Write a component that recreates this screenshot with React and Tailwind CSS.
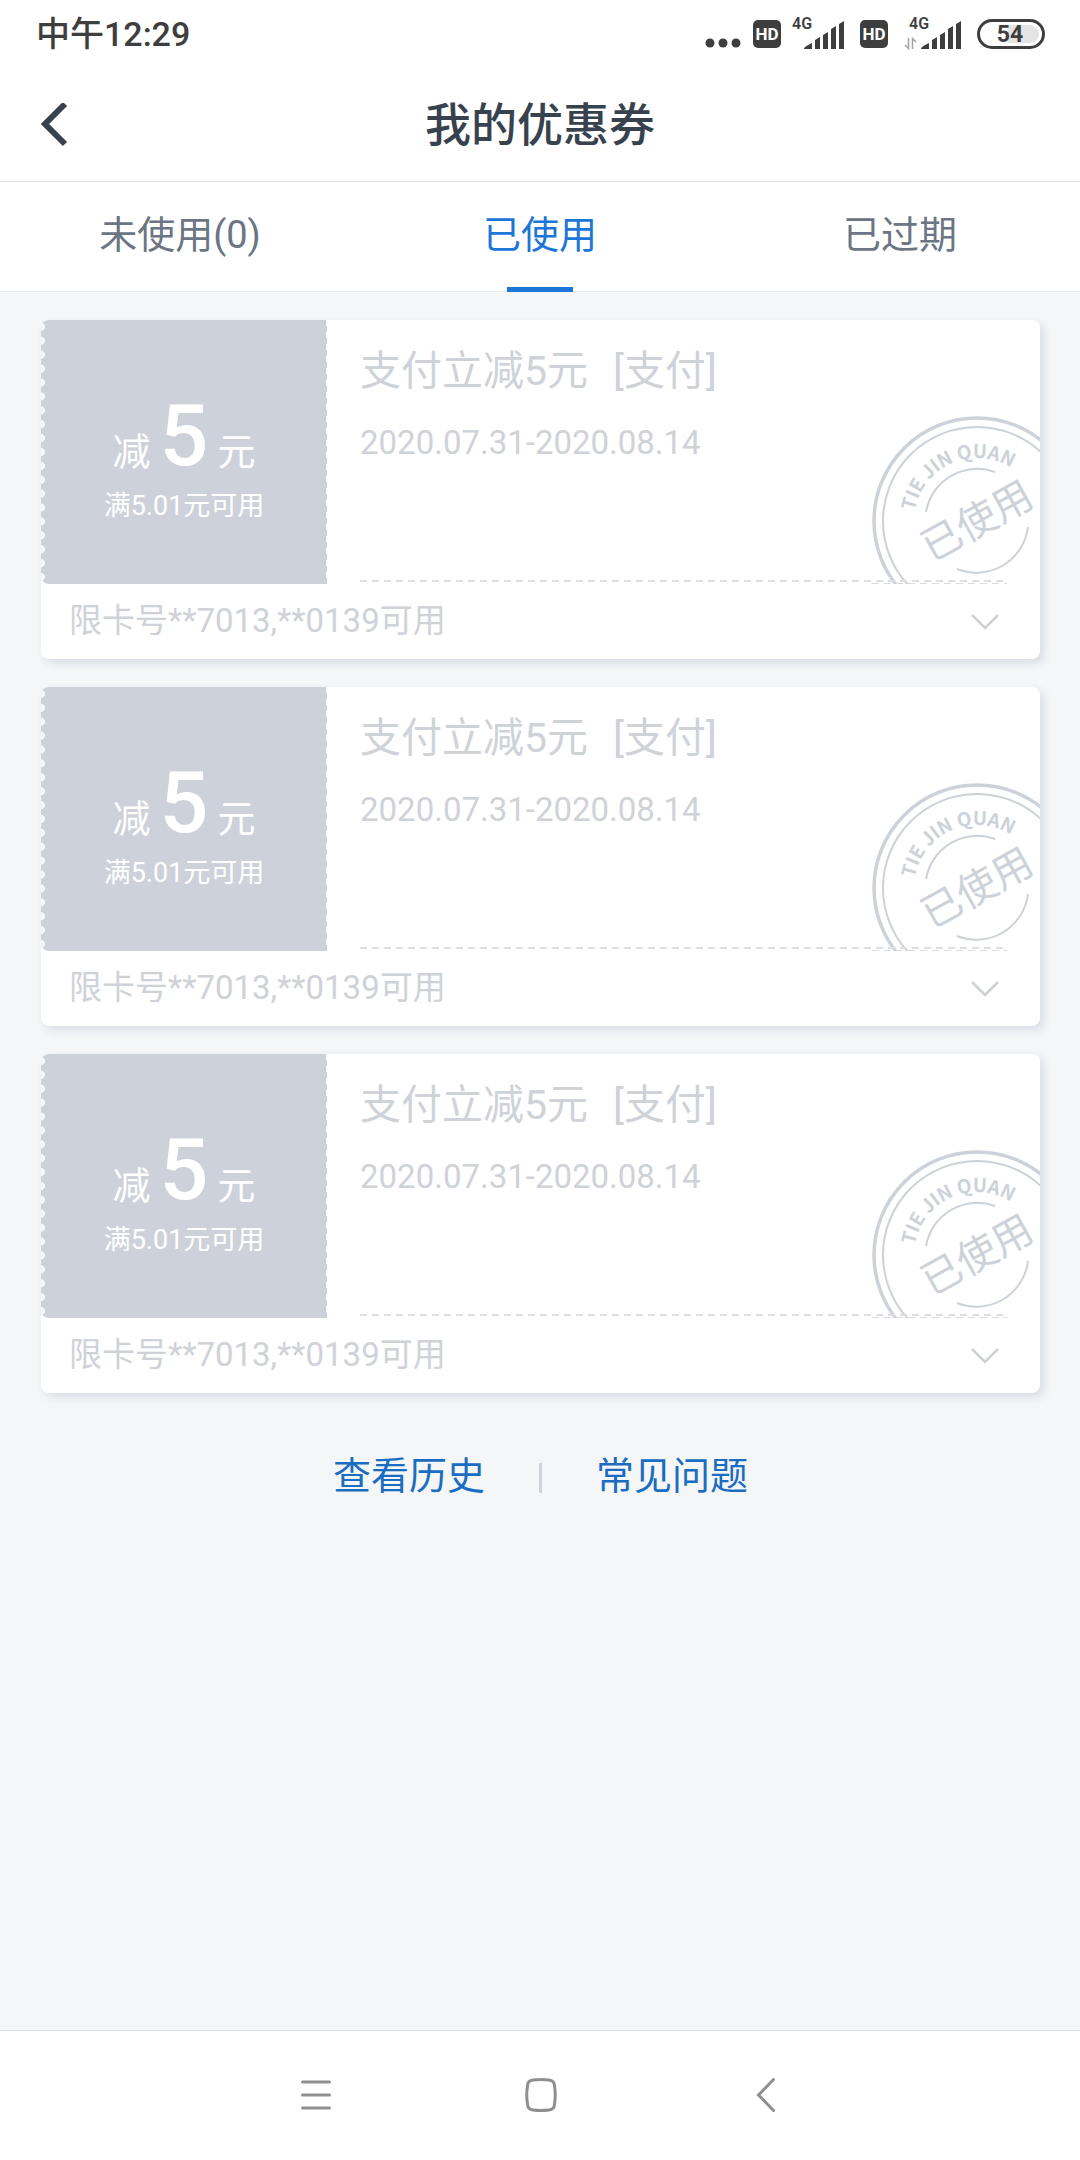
import { useState } from "react";

const tabs = [
  { id: "unused", label: "未使用(0)" },
  { id: "used", label: "已使用" },
  { id: "expired", label: "已过期" },
];

const coupons = [1, 2, 3].map((id) => ({
  id,
  amount: "5",
  condition: "满5.01元可用",
  name: "支付立减5元",
  type: "[支付]",
  period: "2020.07.31-2020.08.14",
  limit: "限卡号**7013,**0139可用",
}));

function HdIcon() {
  return (
    <svg width="28" height="28" viewBox="0 0 28 28">
      <rect width="28" height="28" rx="5" fill="#3e3e3e" />
      <text x="14" y="20" textAnchor="middle" fontSize="17" fontWeight="700" fill="#fff">HD</text>
    </svg>
  );
}

function SignalIcon({ data }) {
  return (
    <svg width={data ? 57 : 52} height="40" viewBox={data ? "-5 -4 57 40" : "0 -4 52 40"} fill="#3e3e3e">
      <text x="0" y="11" fontSize="16" fontWeight="600">4G</text>
      <path d="M12 31c0-2 4-4 8-6v6zM23 22l5-3v12h-5zM31 17l5-3v17h-5zM39 11l5-3v23h-5zM47 6l5-3v28h-5z" />
      {data && (
        <path d="M-4 27l3.500 3.500V20M3.500 31V20.500L7 24" fill="none" stroke="#a3a3a3" strokeWidth="1.5" />
      )}
    </svg>
  );
}

function StatusBar() {
  return (
    <div className="flex h-[68px] items-center justify-between pl-9 pr-[35px] text-[#3e3e3e]">
      <span className="text-[34px] leading-10 font-medium">中午12:29</span>
      <div className="flex items-center">
        <svg width="36" height="28" viewBox="0 0 36 28" fill="#3e3e3e" className="mr-3">
          <circle cx="5" cy="23" r="4.5" />
          <circle cx="18" cy="23" r="4.5" />
          <circle cx="31" cy="23" r="4.5" />
        </svg>
        <HdIcon />
        <span className="ml-[11px] mr-4"><SignalIcon /></span>
        <HdIcon />
        <span className="mx-4"><SignalIcon data /></span>
        <svg width="68" height="30" viewBox="0 0 68 30">
          <path d="M31 6h22a9 9 0 0 1 0 18h-22z" fill="#e4e4e4" />
          <rect x="1.5" y="1.5" width="65" height="27" rx="13.5" fill="none" stroke="#3e3e3e" strokeWidth="3" />
          <text x="33" y="23" textAnchor="middle" fontSize="23" fontWeight="700" fill="#3e3e3e">54</text>
        </svg>
      </div>
    </div>
  );
}

function Stamp() {
  return (
    <svg width="168" height="168" viewBox="0 0 168 168" fill="none" stroke="#cdd2d9">
      <circle cx="105" cy="105" r="103" strokeWidth="3.5" />
      <circle cx="105" cy="105" r="94" strokeWidth="2" />
      <path d="M54 96A52 52 0 0 1 123 56M156 111A52 52 0 0 1 85 153" strokeWidth="2" />
      <path id="stampArc" d="M42 105A63 63 0 0 1 168 105" stroke="none" />
      <text fontSize="19" fontWeight="700" fill="#cdd2d9" stroke="none" className="[font-family:'Noto_Sans_CJK_SC',sans-serif]">
        <textPath href="#stampArc" startOffset="10">TIE JIN QUAN</textPath>
      </text>
      <text x="105" y="119" textAnchor="middle" fontSize="40" fill="#cdd2d9" stroke="none" transform="rotate(-29 105 105)">
        已使用
      </text>
    </svg>
  );
}

function Coupon({ coupon }) {
  return (
    <article className="rounded-lg bg-white text-[#cfd2d7] shadow-[4px_4px_8px_#d8dde5]">
      <div className="flex h-[264px]">
        {/* montant, bords dentelés */}
        <div className="relative flex w-[286px] flex-col items-center rounded-l-lg bg-[#cdd2da] pt-[72px] text-white">
          <div className="absolute inset-y-0 left-0 w-1 bg-[radial-gradient(circle_at_0_50%,#f4f6f8_4px,transparent_4px)] bg-[length:4px_14px] [background-repeat:no-repeat_round]" />
          <div className="absolute inset-y-0 right-0 w-px bg-[linear-gradient(#fff_6px,transparent_6px)] bg-[length:1px_12px] [background-repeat:no-repeat_round]" />
          <div className="flex items-baseline gap-[9px] text-[38px] leading-[88px]">
            <span>减</span>
            <span className="text-[86px] font-medium">{coupon.amount}</span>
            <span>元</span>
          </div>
          <p className="-mt-[15px] text-[27px] leading-[50px]">{coupon.condition}</p>
        </div>

        <div className="relative flex-1 pl-[33px] pt-[25px]">
          <h2 className="flex gap-[25px] text-[41px] leading-[52px]">
            <span>{coupon.name}</span>
            <span>{coupon.type}</span>
          </h2>
          <p className="mt-5 text-[33px] leading-[52px]">{coupon.period}</p>
          <div className="absolute right-0 bottom-0">
            <Stamp />
            <div className="absolute bottom-0 left-0 right-[33px] h-px bg-[repeating-linear-gradient(90deg,#d9dbde_0_7px,transparent_7px_12px)]" />
          </div>
          <div className="absolute right-[33px] bottom-0.5 left-[33px] h-0.5 bg-[repeating-linear-gradient(90deg,#dddfe2_0_7px,transparent_7px_12px)]" />
        </div>
      </div>

      <div className="flex h-[75px] items-center justify-between pb-0.5 pl-7 pr-[41px]">
        <span className="text-[33px]">{coupon.limit}</span>
        <button type="button" aria-label="展开" className="pt-0.5">
          <svg width="28" height="16" viewBox="0 0 28 16" fill="none" stroke="#cdd1d7" strokeWidth="2.5">
            <path d="M1 1l13 13L27 1" />
          </svg>
        </button>
      </div>
    </article>
  );
}

export default function App() {
  const [active, setActive] = useState("used");

  return (
    <div className="flex min-h-screen flex-col bg-[#f4f6f8] [font-family:Roboto,'Noto_Sans_CJK_SC',sans-serif]">
      <div className="bg-white">
        <StatusBar />

        <header className="grid h-[114px] grid-cols-[120px_1fr_120px] items-center border-b border-[#dddfe1] text-[#37424e]">
          <button type="button" aria-label="返回" className="pl-10">
            <svg width="28" height="44" viewBox="0 0 28 44" fill="none" stroke="currentColor" strokeWidth="6">
              <path d="M25 1L5 21l20 20" />
            </svg>
          </button>
          <h1 className="text-center text-[46px] leading-[60px] font-medium">我的优惠券</h1>
        </header>

        <nav role="tablist" className="grid h-[110px] grid-cols-3 border-b border-[#e8eaec]">
          {tabs.map((tab) => (
            <button
              key={tab.id}
              type="button"
              role="tab"
              aria-selected={active === tab.id}
              onClick={() => setActive(tab.id)}
              className={`relative pb-0.5 text-[38px] ${active === tab.id ? "text-[#1d75d8]" : "text-[#6b7583]"}`}
            >
              {tab.label}
              {active === tab.id && (
                <span className="absolute -bottom-px left-1/2 h-[5px] w-[66px] -translate-x-1/2 bg-[#1d75d8]" />
              )}
            </button>
          ))}
        </nav>
      </div>

      <main className="flex-1 pt-7 pr-10 pl-[41px]">
        <div className="flex flex-col gap-7">
          {coupons.map((coupon) => (
            <Coupon key={coupon.id} coupon={coupon} />
          ))}
        </div>

        <div className="mt-[57px] flex items-center justify-center gap-[54px] text-[38px] leading-[52px] text-[#1b6dc1]">
          <a href="#history">查看历史</a>
          <span className="mt-1 h-[30px] w-[3px] bg-[#d0d3d9]" />
          <a href="#faq">常见问题</a>
        </div>
      </main>

      {/* barre de navigation système */}
      <footer className="flex h-[130px] items-center justify-center gap-[165px] border-t border-[#dddfe1] bg-white pb-0.5 pl-0.5">
        <button type="button" aria-label="菜单" className="flex w-[60px] justify-center">
          <svg width="32" height="36" viewBox="0 0 32 36" stroke="#8f8f8f" strokeWidth="3" strokeLinecap="round">
            <path d="M2.5 5h27M2.5 18h27M2.5 31h27" />
          </svg>
        </button>
        <button type="button" aria-label="主页" className="flex w-[60px] justify-center">
          <svg width="32" height="36" viewBox="0 0 32 36" fill="none" stroke="#8f8f8f" strokeWidth="3">
            <path d="M8 3Q16 2 24 3Q29.500 3.500 29.500 9Q31 18 29.500 27Q29.500 32.500 24 33Q16 34 8 33Q2.500 32.500 2.500 27Q1 18 2.500 9Q2.500 3.500 8 3z" />
          </svg>
        </button>
        <button type="button" aria-label="后退" className="flex w-[60px] justify-center">
          <svg width="20" height="36" viewBox="0 0 20 36" fill="none" stroke="#8f8f8f" strokeWidth="3" strokeLinecap="round">
            <path d="M17.500 2.500L2.500 18l15 15.500" />
          </svg>
        </button>
      </footer>
    </div>
  );
}
